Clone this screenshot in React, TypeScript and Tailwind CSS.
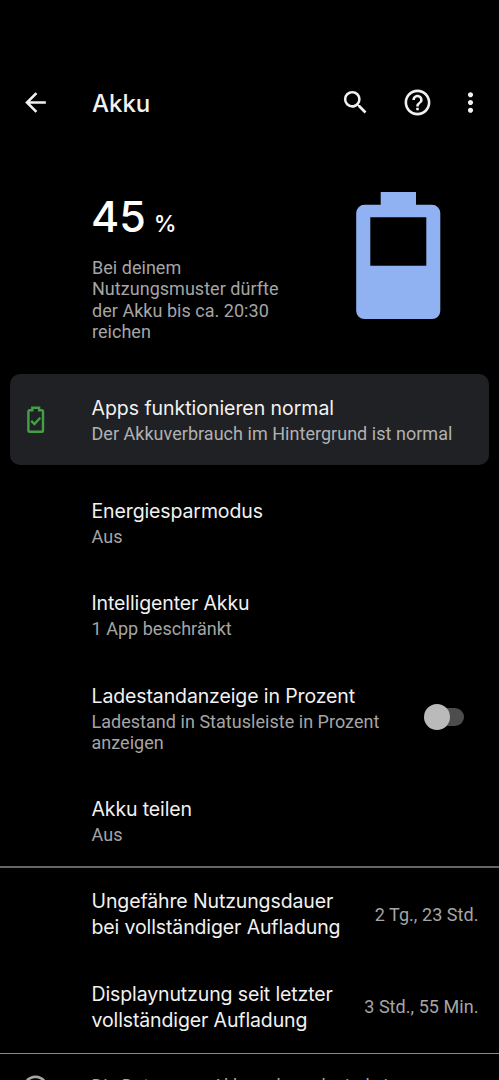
import type { ReactNode } from 'react'
import { MdArrowBack, MdHelpOutline, MdMoreVert, MdSearch, MdInfoOutline } from 'react-icons/md'

interface PreferenceProps {
  title: string
  summary: string
  className?: string
  children?: ReactNode
}

interface UsageRowProps {
  lines: string[]
  value: string
  className: string
}

function Preference({ title, summary, className = '', children }: PreferenceProps) {
  return (
    <div className={`flex pl-[91.5px] ${className}`}>
      <div className="w-[310px]">
        <h2 className="font-[Inter] text-[19.5px] leading-[26px] tracking-[-0.12px] whitespace-nowrap">{title}</h2>
        <p className="mt-[2px] text-[18px] leading-[21.3px] tracking-[0.03px] text-[#a5a5a5]">{summary}</p>
      </div>
      {children}
    </div>
  )
}

function UsageRow({ lines, value, className }: UsageRowProps) {
  return (
    <div className={`flex items-center justify-between pr-[20.5px] pl-[91.5px] ${className}`}>
      <h2 className="font-[Inter] text-[19.5px] leading-[26px] tracking-[-0.12px] whitespace-nowrap">
        {lines.map((line) => (
          <span key={line} className="block">{line}</span>
        ))}
      </h2>
      <span className="text-[18px] tracking-[0.05px] whitespace-nowrap text-[#a5a5a5]">{value}</span>
    </div>
  )
}

export default function App() {
  return (
    <div className="flex h-[1080px] w-[499px] flex-col overflow-hidden bg-black font-[Roboto,sans-serif] text-[#f1f1f1]">
      <header className="mt-[71px] flex h-[63px] shrink-0 items-center pr-[13px] pl-[20px]">
        <MdArrowBack className="size-[31px]" />
        <h1 className="mt-[3px] ml-[41px] font-[Inter] text-[24px] font-medium">Akku</h1>
        <div className="ml-auto flex items-center gap-[31px]">
          <MdSearch className="size-[31px]" />
          <MdHelpOutline className="size-[31px]" />
          <MdMoreVert className="-ml-[9px] size-[31px]" />
        </div>
      </header>

      {/* Ladestand */}
      <section className="flex h-[240px] shrink-0 pt-[55px] pl-[92px]">
        <div className="w-[200px]">
          <div className="flex h-[56px] items-baseline font-[Inter] leading-[54px] font-medium text-white">
            <span className="-ml-px text-[43px]">45</span>
            <span className="ml-[8px] text-[23px]">%</span>
          </div>
          <p className="mt-[12px] text-[18px] leading-[21.3px] tracking-[0.03px] text-[#a5a5a5]">
            Bei deinem Nutzungsmuster dürfte der Akku bis ca. 20:30 reichen
          </p>
        </div>
        <svg className="mt-[3px] ml-[64px] h-[128px] w-[85px]" viewBox="0 0 85 128" fill="#91b2f2">
          <path
            fillRule="evenodd"
            d="M24.7 0h35.3v12.7h16a8.3 8.3 0 0 1 8.3 8.3v97.8a8.3 8.3 0 0 1-8.3 8.3H8.5a8.3 8.3 0 0 1-8.3-8.3V21a8.3 8.3 0 0 1 8.3-8.3h16.2zM14.3 25.3v48.4h56V25.3z"
          />
        </svg>
      </section>

      {/* Statuskarte */}
      <section className="mx-[10px] flex h-[91px] shrink-0 items-center rounded-[10px] bg-[#202124] pl-[16.5px]">
        <svg className="h-[28px] w-[18px]" viewBox="0 0 18 28" fill="none" stroke="#43a047" strokeWidth="2.4">
          <path d="M5.3 4.2V1.7h6.8v2.5h2.6q1.3 0 1.3 1.3v19q0 1.3-1.3 1.3H2.7q-1.3 0-1.3-1.3v-19q0-1.3 1.3-1.3z" />
          <path d="m4.2 14.8 3.2 3.2 5.9-6.3" />
        </svg>
        <div className="mt-[2px] ml-[47px] whitespace-nowrap">
          <h2 className="font-[Inter] text-[19.5px] leading-[26px] tracking-[-0.04px]">Apps funktionieren normal</h2>
          <p className="text-[18px] leading-[25px] tracking-[0.03px] text-[#b0b1b2]">Der Akkuverbrauch im Hintergrund ist normal</p>
        </div>
      </section>

      <main className="shrink-0">
        <Preference title="Energiesparmodus" summary="Aus" className="h-[93px] pt-[33px]" />
        <Preference title="Intelligenter Akku" summary="1 App beschränkt" className="h-[92px] pt-[32px]" />
        <Preference
          title="Ladestandanzeige in Prozent"
          summary="Ladestand in Statusleiste in Prozent anzeigen"
          className="h-[114px] pt-[33px]"
        >
          <button className="relative mt-[21px] ml-[22.5px] h-[26px] w-[40px]" role="switch" aria-checked="false">
            <span className="absolute top-[4px] right-0 h-[18px] w-[34px] rounded-full bg-[#4d4d4d]" />
            <span className="absolute top-0 left-0 size-[26px] rounded-full bg-[#bababa]" />
          </button>
        </Preference>
        <Preference title="Akku teilen" summary="Aus" className="h-[102px] pt-[32px]" />
      </main>

      <section className="shrink-0 border-t-2 border-b border-t-[#656565] border-b-[#8a8a8a]">
        <UsageRow
          lines={['Ungefähre Nutzungsdauer', 'bei vollständiger Aufladung']}
          value="2 Tg., 23 Std."
          className="h-[92px]"
        />
        <UsageRow
          lines={['Displaynutzung seit letzter', 'vollständiger Aufladung']}
          value="3 Std., 55 Min."
          className="h-[93px]"
        />
      </section>

      <footer className="flex shrink-0 pt-[19px] pl-[20px] text-[#a5a5a5]">
        <MdInfoOutline className="size-[31px]" />
        <p className="-mt-px ml-[40.5px] text-[18px] whitespace-nowrap">Die Daten zum Akkuverbrauch sind ein</p>
      </footer>
    </div>
  )
}
